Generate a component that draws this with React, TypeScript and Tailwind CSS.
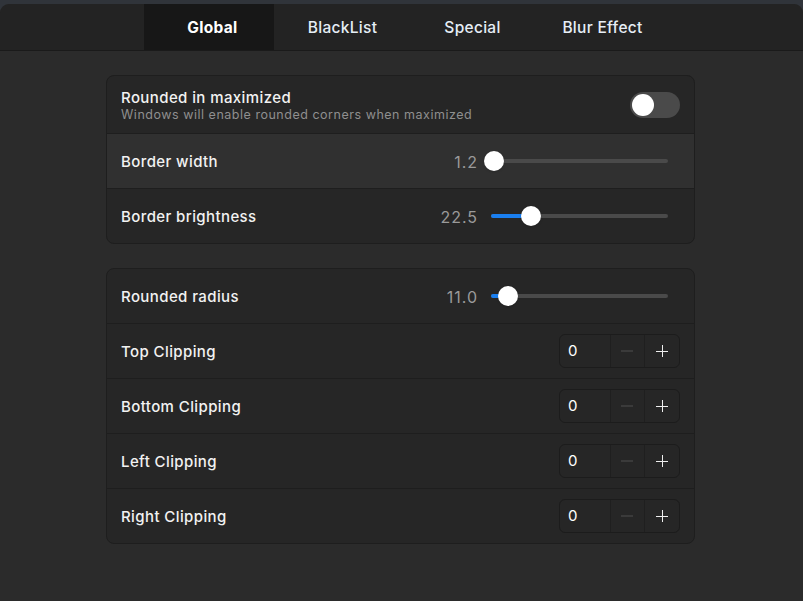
import React, { useState } from "react";

const tabs = ["Global", "BlackList", "Special", "Blur Effect"];

function Slider({ value, knob }: { value: number; knob: number }) {
  return (
    <div className="flex items-center">
      <span className="mt-[2px] w-[60px] pr-[13px] text-right text-[16px] tracking-[1px] text-[#9a9a9a]">
        {value.toFixed(1)}
      </span>
      <div className="relative h-[4px] w-[177px] rounded-full bg-[#4a4a4a]">
        <div className="absolute left-0 top-0 h-full rounded-full bg-[#1a7ff0]" style={{ width: knob }} />
        <div
          className="absolute top-1/2 h-[20px] w-[20px] -translate-x-1/2 -translate-y-1/2 rounded-full bg-white shadow"
          style={{ left: knob }}
        />
      </div>
      <div className="w-[12px]" />
    </div>
  );
}

function Stepper() {
  return (
    <div className="flex h-[34px] w-[121px] overflow-hidden rounded-[6px] border border-[#1c1c1c] bg-[#262626]">
      <div className="flex w-[50px] items-center pl-[8px] pt-[1px] text-[15px] text-white">0</div>
      <div className="flex w-[35px] items-center justify-center border-l border-[#1f1f1f] text-[#4f4f4f]">
        <svg width="12" height="12" viewBox="0 0 12 12"><path d="M0 6h12" stroke="currentColor" strokeWidth="1" /></svg>
      </div>
      <div className="flex w-[35px] items-center justify-center border-l border-[#1f1f1f] text-[#eeeeee]">
        <svg width="12" height="12" viewBox="0 0 12 12"><path d="M0 6.5h12M6.5 0v12" stroke="currentColor" strokeWidth="1" /></svg>
      </div>
    </div>
  );
}

function Row({ label, children, hl, first }: { label: string; children?: React.ReactNode; hl?: boolean; first?: boolean }) {
  return (
    <div className={`flex items-center justify-between pl-[14px] pr-[14px] ${first ? "h-[54px]" : "h-[55px] border-t border-[#1e1e1e]"} ${hl ? "bg-[#303030]" : ""}`}>
      <span className="mt-[2px] text-[15px] font-medium tracking-[0.4px] text-[#f2f2f2]">{label}</span>
      {children}
    </div>
  );
}

export default function App() {
  const [on, setOn] = useState(false);
  return (
    <div className="h-[601px] w-[803px] bg-[#30343a] pt-[4px]" style={{ fontFamily: "Inter, 'Noto Sans', sans-serif" }}>
      <div className="flex h-[597px] flex-col overflow-hidden rounded-t-[9px] bg-[#2b2b2b]">
        <div className="flex h-[47px] justify-center border-b border-[#1a1a1a] bg-[#232323] pl-[5px]">
          {tabs.map((t, i) => (
            <div
              key={t}
              className={`flex w-[130px] items-center justify-center pl-[7px] pt-[2px] text-[15.5px] tracking-[0.3px] ${i === 0 ? "bg-[#171717] font-bold text-white" : "font-medium text-[#e6eef6]"}`}
            >
              {t}
            </div>
          ))}
        </div>
        <div className="flex flex-col items-center gap-[24px] pt-[24px] pr-[2px]">
          <div className="w-[589px] overflow-hidden rounded-[8px] border border-[#1e1e1e] bg-[#262626]">
            <div className="flex h-[57px] items-center justify-between pl-[14px] pr-[14px]">
              <div className="mt-[1px] flex flex-col">
                <span className="text-[15px] font-medium leading-[19px] tracking-[0.4px] text-[#f2f2f2]">Rounded in maximized</span>
                <span className="text-[12.5px] leading-[16px] tracking-[0.52px] text-[#8f8f8f]">
                  Windows will enable rounded corners when maximized
                </span>
              </div>
              <button
                onClick={() => setOn(!on)}
                className={`flex h-[26px] w-[50px] items-center rounded-full px-[2px] ${on ? "justify-end bg-[#1a7ff0]" : "justify-start bg-[#4a4a4a]"}`}
              >
                <span className="h-[22px] w-[22px] rounded-full bg-white" />
              </button>
            </div>
            <Row label="Border width" hl>
              <Slider value={1.2} knob={3} />
            </Row>
            <Row label="Border brightness">
              <Slider value={22.5} knob={40} />
            </Row>
          </div>
          <div className="w-[589px] overflow-hidden rounded-[8px] border border-[#1e1e1e] bg-[#262626]">
            <Row label="Rounded radius" first>
              <Slider value={11.0} knob={17} />
            </Row>
            <Row label="Top Clipping"><Stepper /></Row>
            <Row label="Bottom Clipping"><Stepper /></Row>
            <Row label="Left Clipping"><Stepper /></Row>
            <Row label="Right Clipping"><Stepper /></Row>
          </div>
        </div>
      </div>
    </div>
  );
}
